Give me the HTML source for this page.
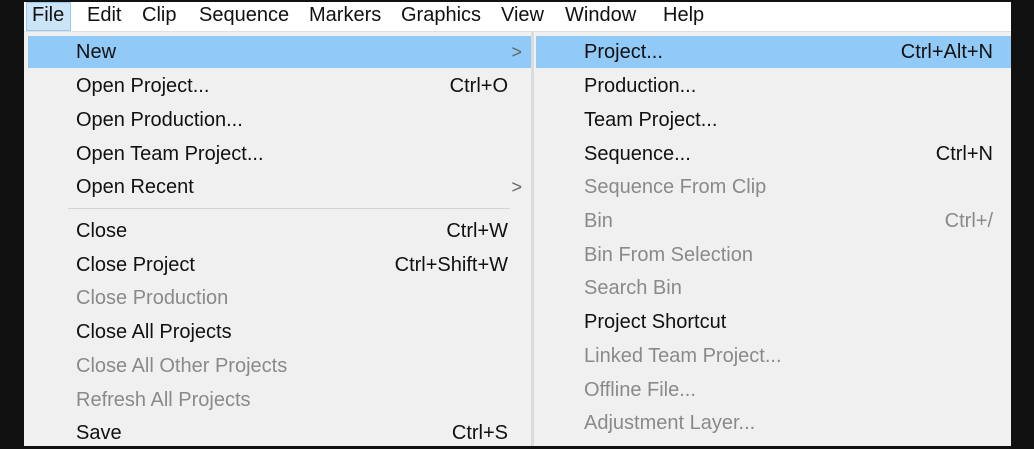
<!DOCTYPE html>
<html><head><style>
*{margin:0;padding:0;box-sizing:border-box}
body{width:1034px;height:446px;background:#111;position:relative;overflow:hidden;font-family:"Liberation Sans",sans-serif;font-size:20px;color:#111}
#bar{position:absolute;left:24px;top:2px;width:987px;height:29px;background:#fff}
#bar span{position:absolute;top:2px}
#file{position:absolute;left:2px;top:0;width:45px;height:29px;background:#cce4f7;border:1px solid #99c9ef}
#m1{position:absolute;left:24px;top:31px;width:508px;height:415px;background:#f0f0f0;border-top:1px solid #e0e0e0}
#div{position:absolute;left:531px;top:31px;width:3px;height:415px;background:#dcdcdc}
#m2{position:absolute;left:534px;top:31px;width:477px;height:415px;background:#f0f0f0;border-top:1px solid #e0e0e0}
.r{position:absolute;left:0;right:0;height:32px;line-height:32px}
.hl{background:#91c9f7}
.t{position:absolute}
.s{position:absolute}
.ch{position:absolute;right:10px;color:#666;font-size:18px}
.g{color:#8a8a8a}
.sep{position:absolute;left:44px;right:22px;top:176px;height:1px;background:#d4d4d4}
</style></head><body>
<div id="bar"><div id="file"></div>
<span style="left:8px">File</span><span style="left:63px">Edit</span><span style="left:118px">Clip</span><span style="left:175px">Sequence</span><span style="left:285px">Markers</span><span style="left:377px">Graphics</span><span style="left:477px">View</span><span style="left:541px">Window</span><span style="left:639px">Help</span></div>
<div id="m1">
<div class="r hl" style="top:4px;left:4px;right:0"><span class="t" style="left:48px">New</span><span class="ch">&gt;</span></div>
<div class="r" style="top:38px"><span class="t" style="left:52px">Open Project...</span><span class="s" style="right:24px">Ctrl+O</span></div>
<div class="r" style="top:72px"><span class="t" style="left:52px">Open Production...</span></div>
<div class="r" style="top:106px"><span class="t" style="left:52px">Open Team Project...</span></div>
<div class="r" style="top:139px"><span class="t" style="left:52px">Open Recent</span><span class="ch">&gt;</span></div>
<div class="sep"></div>
<div class="r" style="top:183px"><span class="t" style="left:52px">Close</span><span class="s" style="right:24px">Ctrl+W</span></div>
<div class="r" style="top:217px"><span class="t" style="left:52px">Close Project</span><span class="s" style="right:24px">Ctrl+Shift+W</span></div>
<div class="r g" style="top:250px"><span class="t" style="left:52px">Close Production</span></div>
<div class="r" style="top:284px"><span class="t" style="left:52px">Close All Projects</span></div>
<div class="r g" style="top:318px"><span class="t" style="left:52px">Close All Other Projects</span></div>
<div class="r g" style="top:352px"><span class="t" style="left:52px">Refresh All Projects</span></div>
<div class="r" style="top:385px"><span class="t" style="left:52px">Save</span><span class="s" style="right:24px">Ctrl+S</span></div>
</div>
<div id="div"></div>
<div id="m2">
<div class="r hl" style="top:4px;left:2px"><span class="t" style="left:48px">Project...</span><span class="s" style="right:18px">Ctrl+Alt+N</span></div>
<div class="r" style="top:38px"><span class="t" style="left:50px">Production...</span></div>
<div class="r" style="top:72px"><span class="t" style="left:50px">Team Project...</span></div>
<div class="r" style="top:106px"><span class="t" style="left:50px">Sequence...</span><span class="s" style="right:18px">Ctrl+N</span></div>
<div class="r g" style="top:139px"><span class="t" style="left:50px">Sequence From Clip</span></div>
<div class="r g" style="top:173px"><span class="t" style="left:50px">Bin</span><span class="s" style="right:18px">Ctrl+/</span></div>
<div class="r g" style="top:207px"><span class="t" style="left:50px">Bin From Selection</span></div>
<div class="r g" style="top:240px"><span class="t" style="left:50px">Search Bin</span></div>
<div class="r" style="top:274px"><span class="t" style="left:50px">Project Shortcut</span></div>
<div class="r g" style="top:308px"><span class="t" style="left:50px">Linked Team Project...</span></div>
<div class="r g" style="top:342px"><span class="t" style="left:50px">Offline File...</span></div>
<div class="r g" style="top:375px"><span class="t" style="left:50px">Adjustment Layer...</span></div>
</div>
</body></html>
